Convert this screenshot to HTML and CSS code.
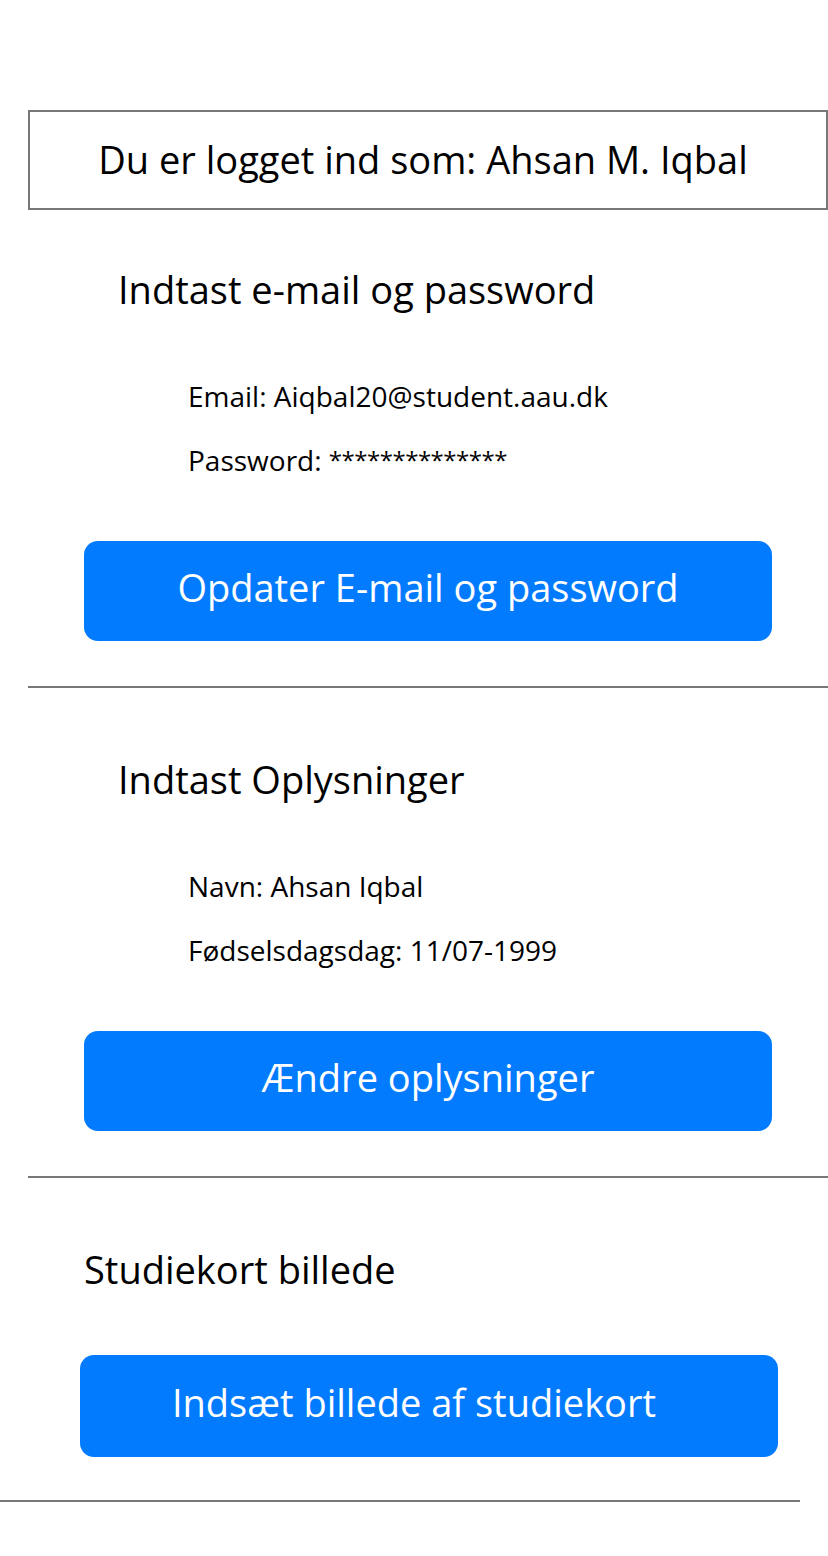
FILE: index.html
```html
<!DOCTYPE html>
<html lang="da">
<head>
<meta charset="utf-8">
<title>Profil</title>
<link rel="stylesheet" href="styles.css">
</head>
<body>
<main class="page">
  <div class="login-box">Du er logget ind som: Ahsan M. Iqbal</div>

  <section class="section first">
    <h2 class="heading">Indtast e-mail og password</h2>
    <div class="fields">
      <p class="field">Email: Aiqbal20@student.aau.dk</p>
      <p class="field">Password: <span class="mask">**************</span></p>
    </div>
    <button class="btn">Opdater E-mail og password</button>
  </section>
  <hr class="divider">

  <section class="section">
    <h2 class="heading">Indtast Oplysninger</h2>
    <div class="fields">
      <p class="field">Navn: Ahsan Iqbal</p>
      <p class="field">Fødselsdagsdag: 11/07-1999</p>
    </div>
    <button class="btn">Ændre oplysninger</button>
  </section>
  <hr class="divider">

  <section class="section">
    <h2 class="heading heading-left">Studiekort billede</h2>
    <button class="btn btn-wide">Indsæt billede af studiekort</button>
  </section>
  <hr class="divider divider-last">
</main>
</body>
</html>
```

FILE: styles.css
```css
* { box-sizing: border-box; }
html, body { margin: 0; padding: 0; background: #fff; }
body {
  font-family: "Open Sans", "Noto Sans", "Liberation Sans", sans-serif;
  color: #000;
  width: 828px;
}
.page {
  display: flex;
  flex-direction: column;
  padding-top: 110px;
}
.login-box {
  margin-left: 28px;
  width: 800px;
  height: 100px;
  border: 2px solid #777;
  display: flex;
  align-items: center;
  justify-content: center;
  font-size: 38px;
  padding: 0 10px 2px 0;
}
.section {
  display: flex;
  flex-direction: column;
  padding-top: 67px;
}
.section.first { padding-top: 55px; }
.heading {
  margin: 0 0 63px 118px;
  font-weight: 400;
  font-size: 38px;
  line-height: 48px;
}
.heading-left { margin-left: 84px; margin-bottom: 62px; }
.fields {
  display: flex;
  flex-direction: column;
  gap: 24px;
  margin-left: 188px;
}
.field {
  margin: 0;
  font-size: 28px;
  line-height: 40px;
}
.mask {
  font-size: 24px;
  letter-spacing: -0.5px;
  vertical-align: 2px;
}
.btn {
  margin: 61px 0 0 84px;
  width: 688px;
  height: 100px;
  border: 0;
  border-radius: 14px;
  background: #037bff;
  color: #fff;
  font-family: inherit;
  font-size: 38px;
  padding: 0 0 8px 0;
}
.btn-wide {
  margin: 0 0 0 80px;
  width: 698px;
  height: 102px;
  padding: 0 30px 8px 0;
}
.divider {
  margin: 45px 0 0 28px;
  width: 800px;
  height: 2px;
  border: 0;
  background: #777;
}
.divider-last {
  margin: 43px 0 0 0;
}
```
